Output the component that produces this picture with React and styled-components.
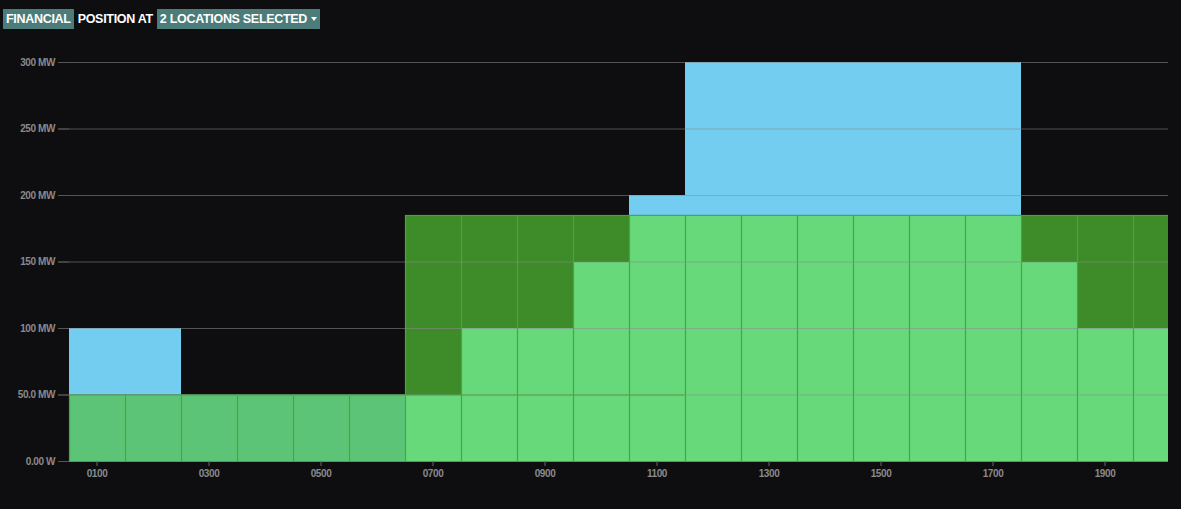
import React from "react";
import styled, { createGlobalStyle } from "styled-components";

const Global = createGlobalStyle`
  html, body { margin: 0; background: #0e0e10; }
  body { font-family: "Liberation Sans", Arial, sans-serif; }
`;

const Page = styled.div`
  width: 1181px; height: 509px; background: #0e0e10; box-sizing: border-box;
  padding-top: 9px;
`;
const Header = styled.div`
  display: flex; align-items: center; gap: 4px; padding-left: 3px; height: 20px;
`;
const Tag = styled.span`
  background: ${p => (p.$hl ? "#4b7c79" : "transparent")};
  color: #fff; font-weight: bold; font-size: 12.5px; letter-spacing: -0.3px;
  height: 20px; line-height: 20px; padding: 0 ${p => (p.$hl ? "3px" : "0")};
  display: inline-flex; align-items: center; gap: 4px;
`;
const Caret = styled.span`
  width: 0; height: 0; border-left: 3.5px solid transparent; border-right: 3.5px solid transparent;
  border-top: 4px solid #fff;
`;
const ChartSvg = styled.svg`display: block;`;

const Y0 = 461, K = 1.33, X0 = 69, W = 56, XEND = 1168;
const y = v => Y0 - v * K;
const LIGHT = "#67d97b", EARLY = "#5cc477", DARK = "#3e8b2a", BLUE = "#72cdf0";

const bars = [
  [[EARLY, 0, 50], [BLUE, 50, 100]],
  [[EARLY, 0, 50], [BLUE, 50, 100]],
  [[EARLY, 0, 50]], [[EARLY, 0, 50]], [[EARLY, 0, 50]], [[EARLY, 0, 50]],
  [[LIGHT, 0, 50], [DARK, 50, 185]],
  [[LIGHT, 0, 100], [DARK, 100, 185]],
  [[LIGHT, 0, 100], [DARK, 100, 185]],
  [[LIGHT, 0, 150], [DARK, 150, 185]],
  [[LIGHT, 0, 185], [BLUE, 185, 200]],
  ...Array.from({ length: 6 }, () => [[LIGHT, 0, 185], [BLUE, 185, 300]]),
  [[LIGHT, 0, 150], [DARK, 150, 185]],
  [[LIGHT, 0, 100], [DARK, 100, 185]],
  [[LIGHT, 0, 100], [DARK, 100, 185]],
];
const yTicks = [[0, "0.00 W"], [50, "50.0 MW"], [100, "100 MW"], [150, "150 MW"], [200, "200 MW"], [250, "250 MW"], [300, "300 MW"]];

export default function App() {
  return (
    <Page>
      <Global />
      <Header>
        <Tag $hl>FINANCIAL</Tag>
        <Tag>POSITION AT</Tag>
        <Tag $hl>2 LOCATIONS SELECTED <Caret /></Tag>
      </Header>
      <ChartSvg width="1181" height="480" viewBox="0 29 1181 480">
        {bars.map((segs, i) => {
          const x = X0 + i * W;
          const w = Math.min(W, XEND - x);
          return segs.map(([c, a, b], j) => (
            <rect key={i + "-" + j} x={x} y={y(b)} width={w} height={y(a) - y(b)} fill={c} />
          ));
        })}
        {bars.map((segs, i) => {
          const x = X0 + i * W;
          const top = Math.max(...segs.filter(s => s[0] !== BLUE).map(s => s[2]));
          return <line key={"s" + i} x1={x + 0.5} x2={x + 0.5} y1={y(top)} y2={Y0} stroke="#45a93a" strokeWidth="1.2" />;
        })}
        <line x1={X0} x2={X0 + 11 * W} y1={y(50) + 0.5} y2={y(50) + 0.5} stroke="#45a93a" />
        <line x1={X0 + 6 * W} x2={XEND} y1={y(185) + 0.5} y2={y(185) + 0.5} stroke="#45a93a" />
        {yTicks.map(([v, l]) => (
          <g key={v}>
            <line x1="58" x2={XEND} y1={y(v) + 0.5} y2={y(v) + 0.5} stroke={v === 0 ? "#45a93a" : "rgba(140,140,140,0.55)"} />
            <line x1="58" x2="69" y1={y(v) + 0.5} y2={y(v) + 0.5} stroke="#555" />
            <text x="55" y={y(v) + 3.5} textAnchor="end" fill="#8a8a8a" fontSize="10" fontWeight="bold" fontFamily="Liberation Sans, Arial, sans-serif" letterSpacing="-0.4">{l}</text>
          </g>
        ))}
        {Array.from({ length: 10 }, (_, k) => {
          const cx = X0 + W / 2 + k * 2 * W;
          const hr = String(1 + 2 * k).padStart(2, "0") + "00";
          return (
            <g key={hr}>
              <line x1={cx} x2={cx} y1={Y0} y2={Y0 + 5} stroke="#666" />
              <text x={cx} y={Y0 + 16} textAnchor="middle" fill="#8a8a8a" fontSize="10" fontWeight="bold" fontFamily="Liberation Sans, Arial, sans-serif" letterSpacing="-0.4">{hr}</text>
            </g>
          );
        })}
      </ChartSvg>
    </Page>
  );
}
